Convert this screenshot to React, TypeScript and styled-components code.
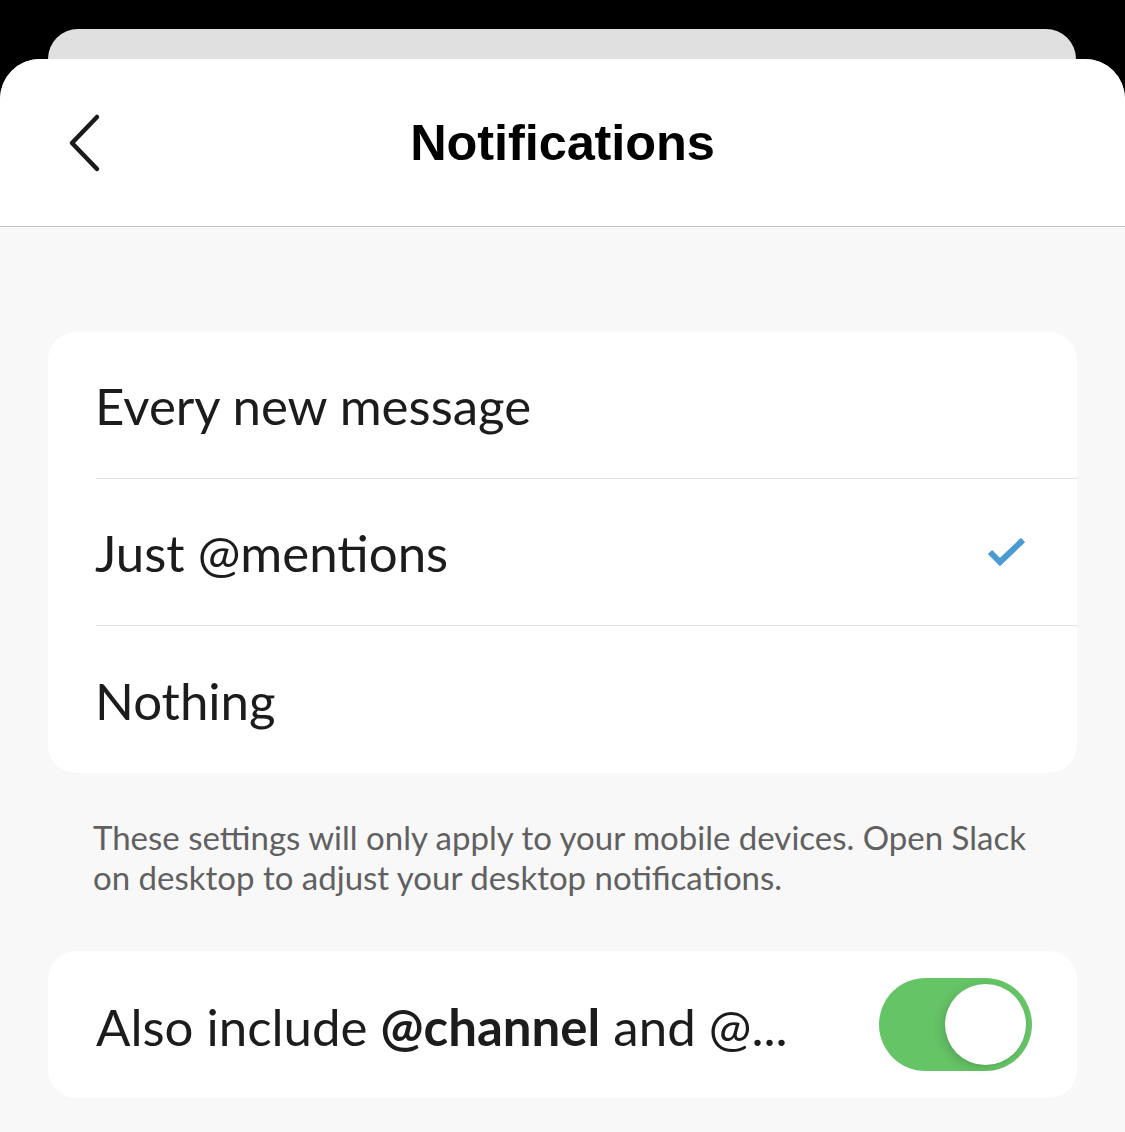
import React from "react";
import styled, { createGlobalStyle } from "styled-components";

const Global = createGlobalStyle`
  html, body { margin: 0; padding: 0; background: #000; }
  body { font-family: Lato, "Noto Sans", sans-serif; -webkit-font-smoothing: antialiased; }
`;

const Page = styled.div`
  min-height: 1132px;
  background: #000;
  padding-top: 29px;
  display: flex;
  flex-direction: column;
  box-sizing: border-box;
`;

const BackCard = styled.div`
  margin: 0 49px 0 48px;
  height: 30px;
  background: #e0e0e0;
  border-radius: 30px 30px 0 0;
`;

const Sheet = styled.div`
  flex: 1;
  display: flex;
  flex-direction: column;
  background: #f8f8f8;
  border-radius: 40px 40px 0 0;
  overflow: hidden;
`;

const Header = styled.header`
  height: 167px;
  background: #fff;
  border-bottom: 1px solid #c6c6c8;
  display: grid;
  grid-template-columns: 120px 1fr 120px;
  align-items: center;
`;

const BackButton = styled.button`
  border: 0;
  background: none;
  padding: 0 0 0 66px;
  display: flex;
  align-items: center;
  height: 60px;
  cursor: pointer;
`;

const Title = styled.h1`
  margin: 0;
  text-align: center;
  font-family: "Liberation Sans", Arial, sans-serif;
  font-weight: 700;
  font-size: 50.5px;
  color: #000;
  letter-spacing: -0.1px;
`;

const Content = styled.main`
  padding: 105px 48px 0 48px;
  display: flex;
  flex-direction: column;
`;

const Card = styled.section`
  background: #fff;
  border-radius: 28px;
  overflow: hidden;
`;

const OptionRow = styled.div<{ $last?: boolean }>`
  height: 147px;
  margin-left: 48px;
  padding-right: 50px;
  display: flex;
  align-items: center;
  justify-content: space-between;
  box-sizing: border-box;
  border-bottom: ${(p) => (p.$last ? "none" : "1px solid #e2e2e2")};
`;

const RowLabel = styled.span`
  font-family: Lato, sans-serif;
  font-size: 51px;
  color: #1d1c1d;
  margin-left: -1px;
  margin-top: 1px;
`;

const Footnote = styled.p`
  margin: 44px 48px 0 45px;
  font-family: Lato, sans-serif;
  font-size: 33px;
  line-height: 40px;
  color: #616061;
`;

const ToggleCard = styled(Card)`
  margin-top: 54px;
  height: 147px;
  display: flex;
  align-items: center;
  justify-content: space-between;
  padding: 0 45px 0 48px;
`;

const ToggleLabel = styled.span`
  font-family: Lato, sans-serif;
  font-size: 51px;
  color: #1d1c1d;
  margin-top: 4px;
  b { font-weight: 700; }
`;

const Switch = styled.div<{ $on: boolean }>`
  width: 153px;
  height: 93px;
  border-radius: 47px;
  background: ${(p) => (p.$on ? "#65c466" : "#e9e9eb")};
  padding: 6px;
  box-sizing: border-box;
  display: flex;
  justify-content: ${(p) => (p.$on ? "flex-end" : "flex-start")};
`;

const Knob = styled.div`
  width: 81px;
  height: 81px;
  border-radius: 50%;
  background: #fff;
  box-shadow: -4px 3px 10px rgba(0, 0, 0, 0.12), 0 1px 2px rgba(0, 0, 0, 0.06);
`;

const options = [
  { label: "Every new message", checked: false },
  { label: "Just @mentions", checked: true },
  { label: "Nothing", checked: false },
];

export default function App() {
  return (
    <>
      <Global />
      <Page>
        <BackCard />
        <Sheet>
          <Header>
            <BackButton aria-label="Back">
              <svg width="36" height="60" viewBox="0 0 36 60" fill="none">
                <path d="M31 4 L6 30 L31 56" stroke="#1a1a1a" strokeWidth="4.5" strokeLinecap="round" strokeLinejoin="round" />
              </svg>
            </BackButton>
            <Title>Notifications</Title>
            <div />
          </Header>
          <Content>
            <Card>
              {options.map((o, i) => (
                <OptionRow key={o.label} $last={i === options.length - 1}>
                  <RowLabel>{o.label}</RowLabel>
                  {o.checked && (
                    <svg width="40" height="32" viewBox="0 0 40 32" fill="none">
                      <path d="M3 16 L13 26 L36 4" stroke="#4a9ad4" strokeWidth="6" strokeLinecap="butt" strokeLinejoin="miter" />
                    </svg>
                  )}
                </OptionRow>
              ))}
            </Card>
            <Footnote>
              These settings will only apply to your mobile devices. Open Slack on desktop to adjust your desktop notifications.
            </Footnote>
            <ToggleCard>
              <ToggleLabel>
                Also include <b>@channel</b> and @...
              </ToggleLabel>
              <Switch $on>
                <Knob />
              </Switch>
            </ToggleCard>
          </Content>
        </Sheet>
      </Page>
    </>
  );
}
